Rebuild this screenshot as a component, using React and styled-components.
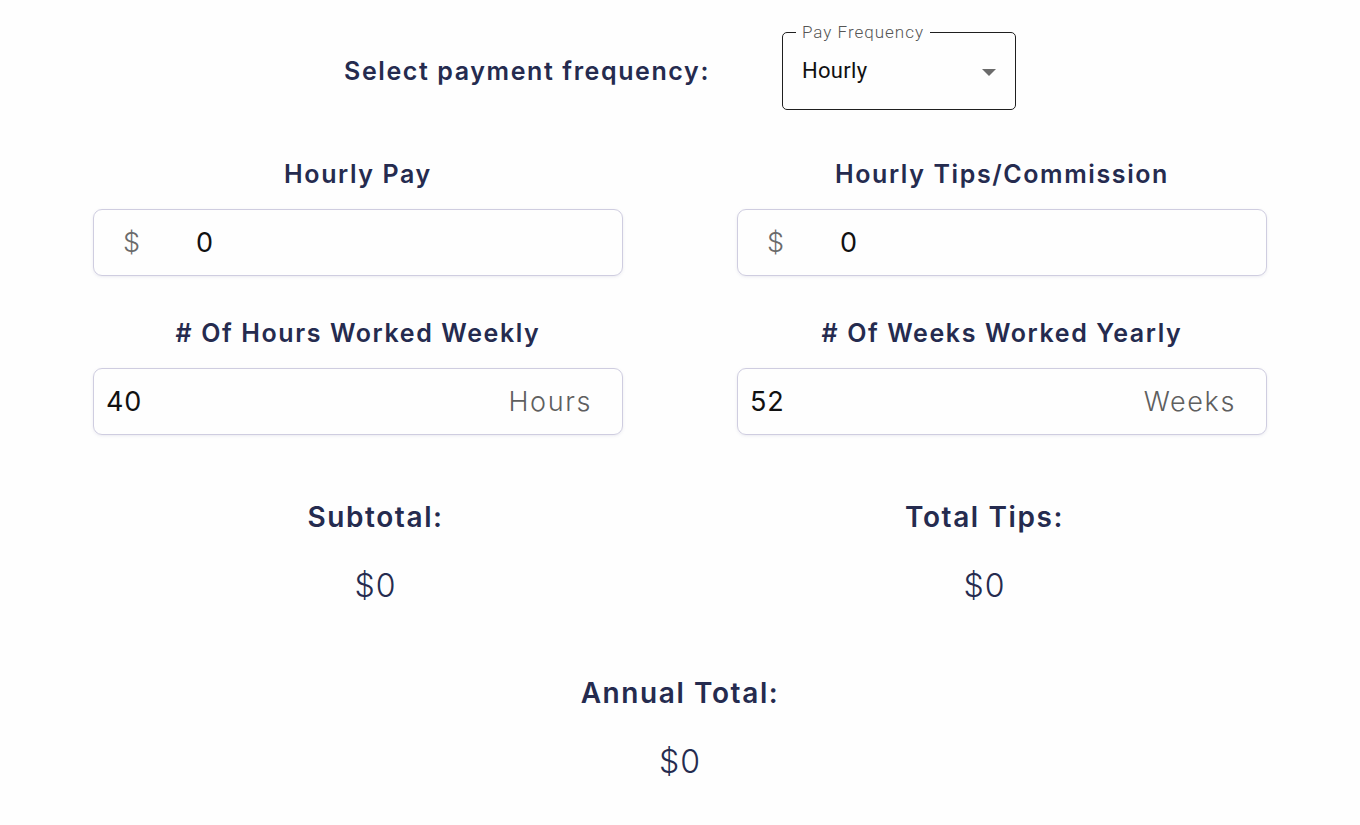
import React from 'react';
import styled, { createGlobalStyle } from 'styled-components';

const GlobalStyle = createGlobalStyle`
  body {
    margin: 0;
    background: #fefefe;
    font-family: "Inter", "Noto Sans", sans-serif;
  }
`;

const Page = styled.main`
  width: 1174px;
  margin: 0 auto;
  padding-top: 32px;
  color: #252b4f;
`;

const FrequencyRow = styled.div`
  display: flex;
  justify-content: center;
  align-items: center;
  gap: 72px;
  margin-bottom: 49px;
`;

const Heading = styled.h2`
  margin: 0;
  font-size: ${(p) => p.size || 25}px;
  line-height: 1.2;
  font-weight: 600;
  letter-spacing: 1.6px;
  text-align: center;
  color: #252b4f;
`;

const SelectBox = styled.div`
  position: relative;
  width: 234px;
  height: 78px;
  box-sizing: border-box;
  border: 1px solid #1f1f1f;
  border-radius: 5px;
  padding: 0 19px 0 19px;
  display: flex;
  align-items: center;
  justify-content: space-between;
  font-family: "Roboto", sans-serif;
`;

const SelectLabel = styled.span`
  position: absolute;
  top: -12px;
  left: 13px;
  padding: 0 6px;
  background: #fefefe;
  font-size: 17px;
  line-height: 22px;
  font-weight: 300;
  color: #555;
  letter-spacing: 1px;
`;

const SelectValue = styled.span`
  font-size: 22px;
  color: #111;
  letter-spacing: 0.3px;
  margin-top: -2px;
`;

const Caret = styled.span`
  width: 0;
  height: 0;
  border-left: 7px solid transparent;
  border-right: 7px solid transparent;
  border-top: 7px solid #6b6b6b;
  margin-top: 2px;
`;

const FieldGrid = styled.div`
  display: grid;
  grid-template-columns: 530px 530px;
  column-gap: 114px;
  row-gap: 42px;
`;

const Field = styled.div`
  display: flex;
  flex-direction: column;
  gap: 20px;
`;

const InputBox = styled.div`
  height: 67px;
  box-sizing: border-box;
  border: 1.5px solid #cfcde0;
  border-radius: 9px;
  box-shadow: 0 1px 3px rgba(120, 120, 160, 0.15);
  display: flex;
  align-items: center;
  padding: 0 30px 0 ${(p) => (p.$prefix ? 29 : 12)}px;
  font-size: 27px;
  letter-spacing: 0.8px;
`;

const Prefix = styled.span`
  color: #6a6a6a;
  width: 73px;
  font-weight: 300;
`;

const Value = styled.span`
  flex: 1;
  color: #111;
`;

const Suffix = styled.span`
  color: #5f5f5f;
  font-weight: 300;
  letter-spacing: 1.6px;
`;

const TotalsGrid = styled.div`
  display: grid;
  grid-template-columns: 500px 500px;
  column-gap: 109px;
  justify-content: center;
  margin-top: 66px;
`;

const TotalBlock = styled.div`
  display: flex;
  flex-direction: column;
  align-items: center;
  gap: 32px;
`;

const Amount = styled.div`
  font-size: 32px;
  line-height: 1.2;
  font-weight: 300;
  letter-spacing: 1px;
  color: #252b4f;
`;

const Annual = styled(TotalBlock)`
  margin-top: 72px;
`;

function InputField({ label, prefix, value, suffix }) {
  return (
    <Field>
      <Heading>{label}</Heading>
      <InputBox $prefix={prefix}>
        {prefix && <Prefix>{prefix}</Prefix>}
        <Value>{value}</Value>
        {suffix && <Suffix>{suffix}</Suffix>}
      </InputBox>
    </Field>
  );
}

export default function App() {
  return (
    <>
      <GlobalStyle />
      <Page>
        <FrequencyRow>
          <Heading>Select payment frequency:</Heading>
          <SelectBox>
            <SelectLabel>Pay Frequency</SelectLabel>
            <SelectValue>Hourly</SelectValue>
            <Caret />
          </SelectBox>
        </FrequencyRow>
        <FieldGrid>
          <InputField label="Hourly Pay" prefix="$" value="0" />
          <InputField label="Hourly Tips/Commission" prefix="$" value="0" />
          <InputField label="# Of Hours Worked Weekly" value="40" suffix="Hours" />
          <InputField label="# Of Weeks Worked Yearly" value="52" suffix="Weeks" />
        </FieldGrid>
        <TotalsGrid>
          <TotalBlock>
            <Heading size={28}>Subtotal:</Heading>
            <Amount>$0</Amount>
          </TotalBlock>
          <TotalBlock>
            <Heading size={28}>Total Tips:</Heading>
            <Amount>$0</Amount>
          </TotalBlock>
        </TotalsGrid>
        <Annual>
          <Heading size={28}>Annual Total:</Heading>
          <Amount>$0</Amount>
        </Annual>
      </Page>
    </>
  );
}
